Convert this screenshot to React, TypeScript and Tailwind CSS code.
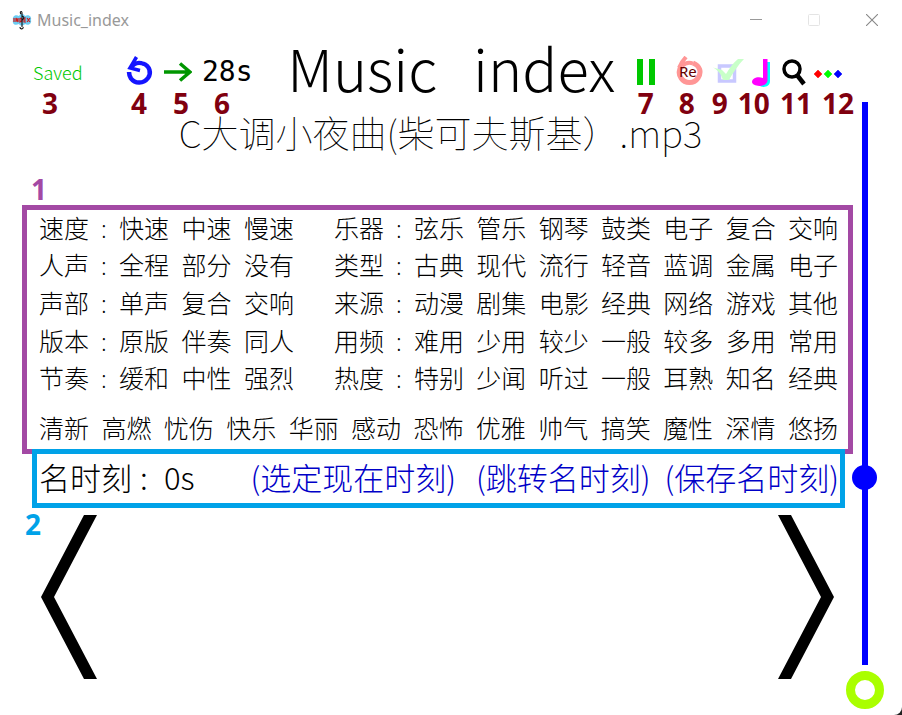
import React from "react";

const CJK = "font-['Noto_Sans_CJK_SC',sans-serif]";

const leftRows = [
  ["速度", "快速", "中速", "慢速"],
  ["人声", "全程", "部分", "没有"],
  ["声部", "单声", "复合", "交响"],
  ["版本", "原版", "伴奏", "同人"],
  ["节奏", "缓和", "中性", "强烈"],
];

const rightRows = [
  ["乐器", "弦乐", "管乐", "钢琴", "鼓类", "电子", "复合", "交响"],
  ["类型", "古典", "现代", "流行", "轻音", "蓝调", "金属", "电子"],
  ["来源", "动漫", "剧集", "电影", "经典", "网络", "游戏", "其他"],
  ["用频", "难用", "少用", "较少", "一般", "较多", "多用", "常用"],
  ["热度", "特别", "少闻", "听过", "一般", "耳熟", "知名", "经典"],
];

const moods = ["清新", "高燃", "忧伤", "快乐", "华丽", "感动", "恐怖", "优雅", "帅气", "搞笑", "魔性", "深情", "悠扬"];

function Note({ children, className = "" }: { children: React.ReactNode; className?: string }) {
  return (
    <span className={`font-['Noto_Sans',sans-serif] text-[28px] leading-[30px] font-bold ${className}`}>{children}</span>
  );
}

function TagGroup({ row }: { row: string[] }) {
  const [label, ...tags] = row;
  return (
    <div className="flex items-center pb-1">
      <span className="flex w-20 shrink-0">
        <span>{label}</span>
        <span className="w-[30px] text-center font-thin">:</span>
      </span>
      <div className="flex flex-1 justify-between">
        {tags.map((t) => (
          <button key={t} type="button">{t}</button>
        ))}
      </div>
    </div>
  );
}

function TitleBar() {
  return (
    <div className="flex h-10 items-center pr-[24px] pl-3">
      <svg width="20" height="20" viewBox="0 0 20 20" aria-hidden="true">
        <path d="M1 10C0 6 4 4 7 6C9 3 12 4 13 6C17 4 20 7 19 10C20 14 16 16 13 14C11 16 8 16 7 14C3 16 0 14 1 10Z" fill="#6cccf2" />
        <path d="M2 8V12M4 12V8L6 12V8M8 8V12L10 11V9L8 8M14 8H12V12H14M12 10H14M15 8L18 12M18 8L15 12" stroke="#d01818" strokeWidth="1.2" fill="none" />
        <path d="M10 17V3C10 0 7 2 9 4M10 6C13 7 12 9 10 10M8 17C8 20 12 19 11 17" stroke="#111" strokeWidth="1.1" fill="none" />
      </svg>
      <span className="ml-[5px] flex-1 font-['Noto_Sans',sans-serif] text-base text-[#999]">Music_index</span>
      <div className="flex items-center gap-[46px]">
        <button type="button" aria-label="Minimize">
          <svg width="12" height="12" viewBox="0 0 12 12"><path d="M0 5.5H12" stroke="#999" /></svg>
        </button>
        <button type="button" aria-label="Maximize">
          <svg width="12" height="12" viewBox="0 0 12 12"><rect x=".5" y=".5" width="11" height="11" rx="1" fill="none" stroke="#e4e4e4" /></svg>
        </button>
        <button type="button" aria-label="Close">
          <svg width="12" height="12" viewBox="0 0 12 12"><path d="M0 0L12 12M12 0L0 12" stroke="#888" strokeWidth="1.1" /></svg>
        </button>
      </div>
    </div>
  );
}

function Header() {
  return (
    <header className="-mr-px flex items-start justify-between pl-[33px]">
      <div className="pt-4">
        <div className="flex h-8 items-center">
          <span className={`${CJK} w-[93px] text-[18px] leading-[30px] font-light text-[#00c800]`}>Saved</span>
          <button type="button" aria-label="Replay" className="mr-[10px]">
            <svg width="28" height="32" viewBox="0 0 28 32">
              <path d="M17 7.500C24 10 25.500 17 22 22C17.500 28 9 28 5 22.500C3.500 20 3 18 3 16" fill="none" stroke="#1414ff" strokeWidth="4.500" />
              <path d="M10.500 1L7 7L4 12L14 14.500" fill="none" stroke="#1414ff" strokeWidth="3.500" />
              <path d="M5 12C8 7 13 6 18 8" fill="none" stroke="#1414ff" strokeWidth="4" />
            </svg>
          </button>
          <button type="button" aria-label="Next" className="mr-[10px]">
            <svg width="28" height="20" viewBox="0 0 28 20">
              <path d="M0 10H25M16 1.500L26 10L16 18.500" fill="none" stroke="#009600" strokeWidth="3.500" />
            </svg>
          </button>
          <span className="font-['DejaVu_Sans_Mono',monospace] text-[28px] leading-8">28s</span>
        </div>
        <div className="flex h-[30px] pl-[9px] text-[#80000f]">
          <Note className="w-[89px]">3</Note>
          <Note className="w-[42px]">4</Note>
          <Note className="w-[41px]">5</Note>
          <Note>6</Note>
        </div>
      </div>
      <h1 className={`${CJK} flex gap-9 pl-[14px] text-[58px] leading-[54px] font-light`}>
        <span>Music</span> <span>index</span>
      </h1>
      <div className="pt-4">
        <div className="flex h-8 items-center">
          <button type="button" aria-label="Pause">
            <svg width="20" height="28" viewBox="0 0 20 28"><path d="M1 1H7V27H1ZM13 1H19V27H13Z" fill="#00c800" /></svg>
          </button>
          <button type="button" aria-label="Repeat" className="ml-5">
            <svg width="27" height="32" viewBox="0 0 27 32">
              <path d="M17 7C24 10 26 16 22 22C18 28 9 28 5 22C2 18 3 13 6 10" fill="none" stroke="#ff9696" strokeWidth="5" />
              <path d="M10 1L6 6L3 12M6 10C9 7 13 6 17 7.500" fill="none" stroke="#ff9696" strokeWidth="4" />
              <text x="3" y="21" fontFamily="Noto Sans" fontSize="15" fill="#640000">Re</text>
            </svg>
          </button>
          <button type="button" aria-label="Select" className="ml-[10px]">
            <svg width="31" height="28" viewBox="0 0 31 28">
              <rect x="6.500" y="8" width="15" height="15" fill="none" stroke="#c8c8ff" strokeWidth="3.500" />
              <path d="M0 9.500L9 12L13 16C17 9 21 4 25 1H31C25 7 20 15 16 22H10C8 16 5 12 0 9.500Z" fill="#c8ffc8" />
            </svg>
          </button>
          <button type="button" aria-label="Music" className="ml-2">
            <svg width="18" height="32" viewBox="0 0 18 32">
              <path d="M13 6H18V25C18 32 9 32 7 29L13 24Z" fill="#00ffff" />
              <path d="M11 3H15.500V24C15.500 32 0 31 0 26C0 22 6 20 11 22Z" fill="#ff00ff" />
            </svg>
          </button>
          <button type="button" aria-label="Search" className="ml-3">
            <svg width="24" height="28" viewBox="0 0 24 28">
              <circle cx="10" cy="11" r="8" fill="none" stroke="#000" strokeWidth="3.500" />
              <path d="M15 17L22 26" stroke="#000" strokeWidth="4.500" />
            </svg>
          </button>
          <button type="button" aria-label="More" className="ml-2">
            <svg width="28" height="28" viewBox="0 0 28 28">
              <path d="M4 12L8 16L4 20L0 16Z" fill="#f00" stroke="#f00" strokeWidth=".5" />
              <path d="M14 12L18 16L14 20L10 16Z" fill="#0f0" stroke="#0f0" strokeWidth=".5" />
              <path d="M24 12L28 16L24 20L20 16Z" fill="#00f" stroke="#00f" strokeWidth=".5" />
            </svg>
          </button>
        </div>
        <div className="flex h-[30px] pl-[2px] text-[#80000f]">
          <Note className="mr-[25px]">7</Note>
          <Note className="mr-[17px]">8</Note>
          <Note className="mr-[10px]">9</Note>
          <Note className="mr-[10px]">10</Note>
          <Note className="mr-[10px]">11</Note>
          <Note>12</Note>
        </div>
      </div>
    </header>
  );
}

export default function App() {
  return (
    <div className="min-h-screen bg-[#222]">
      <div className="flex min-h-screen flex-col rounded-br-lg bg-white text-black">
        <TitleBar />
        <div className="flex flex-1">
          <main className="min-w-0 flex-1">
            <Header />
            <p className={`${CJK} pb-[6px] pl-7 text-center text-[37px] leading-[28px] font-thin`}>C大调小夜曲(柴可夫斯基）.mp3</p>
            <Note className="mt-[22px] block pb-px pl-[31px] text-[#a349a4]">1</Note>
            <section className={`${CJK} ml-[22px] border-[5px] border-[#a349a4] pr-[10px] pl-3 text-[25px] leading-8 font-light`}>
              <div className="grid h-[188px] grid-cols-[255fr_504fr] grid-rows-5 gap-x-10">
                {leftRows.map((row, i) => (
                  <React.Fragment key={row[0]}>
                    <TagGroup row={row} />
                    <TagGroup row={rightRows[i]} />
                  </React.Fragment>
                ))}
              </div>
              <div className="flex h-[51px] items-center justify-between pt-1.5">
                {moods.map((m) => (
                  <button key={m} type="button">{m}</button>
                ))}
              </div>
            </section>
            <section className={`${CJK} relative -mt-[5px] mr-2 ml-8 flex h-[59px] items-center border-[5px] border-[#00a2e8] pr-px pb-1 pl-[2px] text-[31px] leading-10 font-light`}>
              <span>名时刻</span>
              <span className="w-8 pl-2">:</span>
              <span className="flex-1">0s</span>
              <div className="flex text-[#0000c8]">
                <button type="button" className="mr-5">(选定现在时刻)</button>
                <button type="button" className="mr-3.5">(跳转名时刻)</button>
                <button type="button">(保存名时刻)</button>
              </div>
            </section>
            <div className="flex items-start pt-[7px] pr-[19px] pl-[25px]">
              <Note className="-mt-[6px] w-4 text-[#00a2e8]">2</Note>
              <button type="button" aria-label="Previous song">
                <svg className="block" width="56" height="164" viewBox="0 0 56 164"><path d="M43 0H56L13 82L56 164H43L0 82Z" /></svg>
              </button>
              <button type="button" aria-label="Next song" className="ml-auto">
                <svg className="block" width="56" height="164" viewBox="0 0 56 164"><path d="M13 0H0L43 82L0 164H13L56 82Z" /></svg>
              </button>
            </div>
          </main>
          <aside className="mr-[25px] flex w-6 flex-col items-center pt-[62px]">
            <input
              type="range"
              aria-label="Volume"
              min={0}
              max={1000}
              defaultValue={675}
              className="h-[563px] w-[25px] shrink-0 appearance-none bg-transparent [writing-mode:vertical-lr] [&::-webkit-slider-runnable-track]:mx-auto [&::-webkit-slider-runnable-track]:w-[6px] [&::-webkit-slider-runnable-track]:bg-[#0000ff] [&::-webkit-slider-thumb]:-ml-[10px] [&::-webkit-slider-thumb]:h-[25px] [&::-webkit-slider-thumb]:w-[25px] [&::-webkit-slider-thumb]:appearance-none [&::-webkit-slider-thumb]:rounded-full [&::-webkit-slider-thumb]:bg-[#0000ff]"
            />
            <button type="button" aria-label="Play mode" className="mt-[6px] h-[38px] w-[38px] shrink-0 rounded-full border-[9px] border-[#aaff00]" />
          </aside>
        </div>
      </div>
    </div>
  );
}
